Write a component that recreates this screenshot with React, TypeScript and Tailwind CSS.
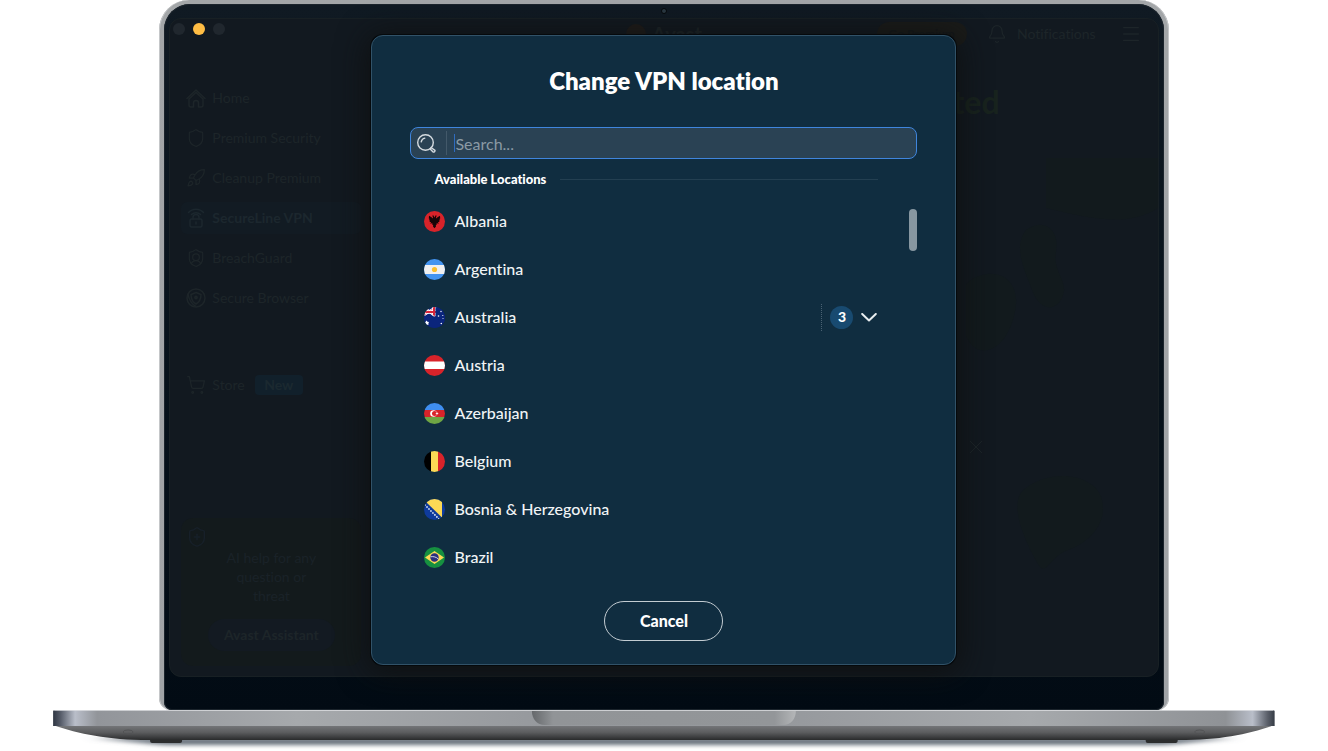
import React, { useState } from "react";
import {
  Bell,
  House,
  Menu,
  Rocket,
  Shield,
  ShieldPlus,
  ShieldUser,
  ShoppingCart,
} from "lucide-react";

const WifiLock = () => (
  <svg viewBox="0 0 20 20" className="size-5" fill="none" stroke="currentColor" strokeWidth="1.5" strokeLinecap="round">
    <path d="M2.5 4.5C6.5 0 13.500 0 17.500 4.500M5.500 6.500C8 4 12 4 14.500 6.500" />
    <rect x="4" y="11" width="12" height="8" rx="1.500" />
    <path d="M7 11V9.500a3 3 0 0 1 6 0V11M10 14v2" />
  </svg>
);

const SecureBrowserIcon = () => (
  <svg viewBox="0 0 20 20" className="size-5" fill="none" stroke="currentColor" strokeWidth="1.500">
    <circle cx="10" cy="10" r="9" />
    <path d="M10 4.500 15 6.500C15 11 13.500 14 10 16 6.500 14 5 11 5 6.500ZM2 6c1 6 3.500 10 8 12.500" />
    <circle cx="10" cy="9.500" r="1.200" fill="currentColor" />
  </svg>
);

// Outline house with a separate roof line and a small door notch
const HomeIcon = () => (
  <svg viewBox="0 0 20 20" className="size-5" fill="none" stroke="currentColor" strokeWidth="1.500" strokeLinejoin="round" strokeLinecap="round">
    <path d="M1 10.500 10 2l9 8.500M3 11v6a2 2 0 0 0 2 2h2.500v-4a2.500 2.500 0 0 1 5 0v4H15a2 2 0 0 0 2-2v-6L10 4.500z" />
  </svg>
);

const iconProps = { size: 20, strokeWidth: 1.5 };

const navItems = [
  { label: "Home", icon: <HomeIcon /> },
  { label: "Premium Security", icon: <Shield {...iconProps} /> },
  { label: "Cleanup Premium", icon: <Rocket {...iconProps} /> },
  { label: "SecureLine VPN", icon: <WifiLock />, active: true },
  { label: "BreachGuard", icon: <ShieldUser {...iconProps} /> },
  { label: "Secure Browser", icon: <SecureBrowserIcon /> },
];

// Every flag is drawn on a 21x21 square and rounded off by its wrapper
const locations = [
  {
    name: "Albania",
    flag: (
      <>
        <path fill="#d8232a" d="M0 0h21v21H0z" />
        <path
          fill="#160507"
          d="M10.500 6.500 9.300 4.200 8 5l1 .8L8.800 7.500 7.500 6.300 5 4.800l-.2 2.700.7.300-.4 1.500.8.300-.3 1.500 1.300-.1-.4 1.900 1.700-.9.200 1.700.8.600-.2 1.300 1.500 1.700 1.500-1.700-.2-1.300.8-.6.200-1.700 1.700.9-.4-1.900 1.300.1-.3-1.500.8-.3-.4-1.500.7-.3-.2-2.700-2.500 1.500-1.300 1.200-.2-1.700 1-.8-1.300-.8z"
        />
      </>
    ),
  },
  {
    name: "Argentina",
    flag: (
      <>
        <path fill="#4394f0" d="M0 0h21v21H0z" />
        <path fill="#f0f0f0" d="M0 6h21v9H0z" />
        <circle cx="10.500" cy="10.500" r="2.600" fill="#fbc02d" />
      </>
    ),
  },
  {
    name: "Australia",
    cities: 3,
    flag: (
      <>
        <path fill="#0b257c" d="M0 0h21v21H0z" />
        <path stroke="#fff" strokeWidth="2.400" d="M0 0l12 10M12 0 0 8" />
        <path stroke="#d9253a" strokeWidth="1" d="M0 0l12 10M12 0 0 8" />
        <path stroke="#fff" strokeWidth="3.600" d="M10 0v8M0 5h12" />
        <path stroke="#d9253a" strokeWidth="2" d="M10 0v8M0 5h12" />
        <path fill="#0b257c" d="M11.500 0H21v10h-9.500zM0 9.500h21V21H0z" />
        <path fill="#fff" d="m2.500 13.500 1 1.200 1.500.2-.6 1.400.2 1.500H2l-1-2z" />
        <circle cx="14.500" cy="9" r=".8" fill="#fff" />
        <circle cx="18.800" cy="8.500" r=".6" fill="#fff" />
        <circle cx="17" cy="4.500" r=".7" fill="#fff" />
        <circle cx="17.300" cy="16.500" r=".8" fill="#fff" />
        <circle cx="19" cy="11.500" r=".5" fill="#fff" />
      </>
    ),
  },
  {
    name: "Austria",
    flag: (
      <>
        <path fill="#d8232a" d="M0 0h21v21H0z" />
        <path fill="#fff" d="M0 6.500h21v7.500H0z" />
      </>
    ),
  },
  {
    name: "Azerbaijan",
    flag: (
      <>
        <path fill="#3f8ef0" d="M0 0h21v7H0z" />
        <path fill="#d8232a" d="M0 7h21v7H0z" />
        <path fill="#6fa544" d="M0 14h21v7H0z" />
        <circle cx="9.500" cy="10.500" r="3.300" fill="#fff" />
        <circle cx="10.500" cy="10.500" r="2.500" fill="#d8232a" />
        <path fill="#fff" d="m13 8.800.5 1.200 1.200.5-1.200.5-.5 1.200-.5-1.200-1.200-.5 1.200-.5z" />
      </>
    ),
  },
  {
    name: "Belgium",
    flag: (
      <>
        <path fill="#000" d="M0 0h7v21H0z" />
        <path fill="#fcd955" d="M7 0h7v21H7z" />
        <path fill="#d8232a" d="M14 0h7v21h-7z" />
      </>
    ),
  },
  {
    name: "Bosnia & Herzegovina",
    flag: (
      <>
        <path fill="#0f3b9c" d="M0 0h21v21H0z" />
        <path fill="#fcd955" d="M2 0h16v18.500L2 3z" />
        <path stroke="#fff" strokeWidth="1.500" strokeDasharray="1.500 1.300" d="M.5 5.500 15 20" />
      </>
    ),
  },
  {
    name: "Brazil",
    flag: (
      <>
        <path fill="#169040" d="M0 0h21v21H0z" />
        <path fill="#fcd955" d="m10.500 4 9.500 6.500-9.500 6.500L1 10.500z" />
        <circle cx="10.500" cy="10.500" r="4.200" fill="#2b2f7f" />
        <path stroke="#e8e8f0" strokeWidth=".9" fill="none" d="M6.500 9.800c3-.6 5.800.2 7.800 2.200" />
      </>
    ),
  },
];

function AppBackground() {
  return (
    <div className="col-start-1 row-start-1 flex min-w-0 flex-col text-[#1d2529]">
      <header className="grid h-[30px] grid-cols-[1fr_auto_1fr] items-center">
        <div className="flex gap-2 self-start pl-[3px] pt-1">
          <span className="size-3 rounded-full bg-[#20272e]" />
          <span className="size-3 rounded-full bg-[#ffbd44]" />
          <span className="size-3 rounded-full bg-[#20272e]" />
        </div>
        <div className="flex items-center gap-1.5 text-xl leading-5 font-bold">
          <span className="size-5 rounded-full bg-[#1f1c1a]" />
          Avast
        </div>
        <div className="flex items-center justify-end pr-4">
          <button className="h-6 rounded-full bg-[#1a1b19] px-3 text-xs font-bold text-[#131719]">
            Go Premium
          </button>
          <Bell className="ml-5" {...iconProps} />
          <span className="ml-2.5 text-sm">Notifications</span>
          <Menu className="ml-6" size={22} strokeWidth={1.5} />
        </div>
      </header>
      <div className="flex flex-1 justify-between">
        <aside className="w-[191px] pl-[11px] pt-[29px]">
          <nav>
            <ul>
              {navItems.map((item) => (
                <li key={item.label} className="flex h-10 items-center">
                  <a
                    href="#"
                    className={
                      item.active
                        ? "flex h-8 w-full items-center gap-1.5 rounded-md bg-[#121b23] pl-[5px] text-sm font-bold text-[#1c272e]"
                        : "flex h-8 w-full items-center gap-1.5 pl-[5px] text-sm"
                    }
                  >
                    {item.icon}
                    {item.label}
                  </a>
                </li>
              ))}
            </ul>
            <a href="#" className="mt-[47px] flex h-10 items-center gap-1.5 pl-[5px] text-sm">
              <ShoppingCart {...iconProps} />
              Store
              <span className="ml-1 flex h-5 w-12 items-center justify-center rounded-sm bg-[#11202b] text-sm font-bold text-[#1b2930]">
                New
              </span>
            </a>
          </nav>
          <section className="mt-[113px] flex h-[148px] flex-col items-center rounded-xl bg-[#131a1c] pt-2">
            <ShieldPlus className="ml-[5px] self-start" size={22} strokeWidth={1.5} color="#172029" />
            <p className="w-24 text-center text-sm leading-[19px] text-[#1a2228]">
              AI help for any question or threat
            </p>
            <button className="mt-3.5 h-8 rounded-full bg-[#131a22] px-4 text-sm font-bold">
              Avast Assistant
            </button>
          </section>
        </aside>
        <div className="flex w-[310px] flex-col pt-[37px]">
          <h1 className="w-[152px] text-right text-[32px] leading-8 font-bold text-[#18231e]">
            Protected
          </h1>
          <div className="mt-10 flex items-center pl-[118px]">
            <svg viewBox="0 0 192 420" className="w-full" fill="#121a1d">
              <path d="M60 72c20-14 34 2 30 22s14 30 6 46-24 10-30-8-20-42-6-60zM8 120c24-12 44 2 42 26s-16 50-36 46-30-60-6-72z" />
              <path d="M60 330c26-20 70-14 76 12s-16 44-34 50-22 28-30 14-34-62-12-76z" />
              <path d="M80 0h112v50c-30 20-70 10-112 0z" />
              <path d="m4 283 12 12m0-12-12 12" stroke="#1d2529" />
            </svg>
          </div>
        </div>
      </div>
    </div>
  );
}

function LocationDialog() {
  const [query, setQuery] = useState("");
  const shown = locations.filter((location) =>
    location.name.toLowerCase().includes(query.toLowerCase())
  );

  return (
    <div
      role="dialog"
      aria-labelledby="dialog-title"
      className="z-10 col-start-1 row-start-1 mt-4 mb-[11px] w-full max-w-[585px] justify-self-center rounded-xl border border-[#315268] bg-[#102d40] px-[38px] pt-[29px] pb-[23px] text-white shadow-[0_0_0_1px_#05090c,0_4px_30px_4px_rgba(14,16,16,0.9)]"
    >
      <h2 id="dialog-title" className="text-center text-2xl leading-8 font-extrabold">
        Change VPN location
      </h2>
      <label className="mt-[30px] flex h-8 items-center rounded-lg border border-[#3f85dd] bg-[#2a4254] pl-1.5">
        <svg viewBox="0 0 19 19" className="size-[19px]" fill="none" stroke="#d5dbe0" strokeWidth="1.400" strokeLinecap="round">
          <circle cx="8.500" cy="8.500" r="7.800" />
          <path d="M4.200 7.800c.4-2 1.700-3.300 3.600-3.700" />
          <path d="m14 13.500 3.600 2.600c1 .9-.4 2.700-1.500 1.800l-2.900-3" strokeLinejoin="round" />
        </svg>
        <span className="ml-2.5 h-6 w-px bg-[#43596a]" />
        <span className="ml-[7px] h-[18px] w-px bg-[#2f6cbf]" />
        <input
          type="text"
          aria-label="Search"
          placeholder="Search..."
          value={query}
          onChange={(e) => setQuery(e.target.value)}
          className="h-full min-w-0 flex-1 bg-transparent text-base text-white outline-none placeholder:text-[#8b9aa5]"
        />
      </label>
      <div className="mt-2.5 flex items-center gap-3.5 pr-[39px] pl-6">
        <h3 className="text-[13px] leading-5 font-black">Available Locations</h3>
        <span className="h-px flex-1 bg-[#233f51]" />
      </div>
      <div className="mt-2 flex">
        <ul className="min-w-0 flex-1 pr-8 pl-3.5">
          {shown.map((location) => (
            <li key={location.name} className="flex h-12 items-center gap-[9px] text-base font-medium">
              <span className="size-[21px] overflow-hidden rounded-full">
                <svg viewBox="0 0 21 21">{location.flag}</svg>
              </span>
              <span className="flex-1 text-[#f1f4f6]">{location.name}</span>
              {location.cities && (
                <button
                  aria-label={`${location.cities} cities`}
                  className="flex items-center border-l border-dotted border-[#4a6273] py-0.5 pl-2"
                >
                  <span className="flex size-[23px] items-center justify-center rounded-full bg-[#184a70] text-sm font-black">
                    {location.cities}
                  </span>
                  <svg viewBox="0 0 16 9" className="ml-2 h-[9px] w-4" fill="none" stroke="#e8edf0" strokeWidth="2" strokeLinecap="round" strokeLinejoin="round">
                    <path d="m1.200 1 6.800 6.500L14.800 1" />
                  </svg>
                </button>
              )}
            </li>
          ))}
        </ul>
        <div className="mt-3 h-[42px] w-2 rounded-full bg-[#8797a1]" />
      </div>
      <div className="mt-5 flex justify-center">
        <button className="h-10 w-[119px] rounded-full border border-[#c3ccd2] text-base font-black">
          Cancel
        </button>
      </div>
    </div>
  );
}

function LaptopBase() {
  return (
    <svg viewBox="0 0 1222 40" className="block w-[92%]">
      <defs>
        <linearGradient id="deck">
          <stop offset="0" stopColor="#2f3643" />
          <stop offset="0.006" stopColor="#555b68" />
          <stop offset="0.018" stopColor="#b9bec9" />
          <stop offset="0.036" stopColor="#92959a" />
          <stop offset="0.2" stopColor="#a6a9ac" />
          <stop offset="0.4" stopColor="#96999d" />
          <stop offset="0.6" stopColor="#96999d" />
          <stop offset="0.8" stopColor="#a6a9ac" />
          <stop offset="0.960" stopColor="#8f9296" />
          <stop offset="0.982" stopColor="#b9bec9" />
          <stop offset="0.994" stopColor="#5c616b" />
          <stop offset="1" stopColor="#353b45" />
        </linearGradient>
        <linearGradient id="belly" x1="0" y1="0" x2="0" y2="1">
          <stop offset="0" stopColor="#77797c" />
          <stop offset="0.500" stopColor="#5b5c5e" />
          <stop offset="1" stopColor="#2a2b2c" />
        </linearGradient>
        <linearGradient id="notch">
          <stop offset="0" stopColor="#65686b" />
          <stop offset="0.080" stopColor="#919497" />
          <stop offset="0.920" stopColor="#939699" />
          <stop offset="1" stopColor="#b4b6b8" />
        </linearGradient>
        <filter id="soft" x="-5%" y="-200%" width="110%" height="500%">
          <feGaussianBlur stdDeviation="8 2" />
        </filter>
      </defs>
      <path fill="#66707a" filter="url(#soft)" d="M40 28h1142l-70 7H110z" />
      <path fill="#2c2d2e" d="M97 28h32v3a2 2 0 0 1-2 2H99a2 2 0 0 1-2-2zM1093 28h32v3a2 2 0 0 1-2 2h-28a2 2 0 0 1-2-2z" />
      <path fill="url(#belly)" d="M0 15h1222c-26 9-54 15-96 15H96C54 30 26 24 0 15z" />
      <path fill="url(#deck)" d="M1 0h1220l1 1v15H0V1z" />
      <path fill="#e4e6e8" opacity=".7" d="M1 0h1220v1H1z" />
      <path fill="url(#notch)" d="M479 1h264c0 8-5 14-13 14H492c-8 0-13-6-13-14z" />
      <ellipse cx="75" cy="22" rx="5" ry="2" fill="none" stroke="#525355" />
      <ellipse cx="1147" cy="22" rx="5" ry="2" fill="none" stroke="#525355" />
    </svg>
  );
}

function App() {
  return (
    <main className="flex flex-col items-center overflow-hidden bg-white font-['Lato',sans-serif] [font-variant-ligatures:none]">
      <div className="w-[76%] rounded-t-[30px] rounded-b-xl bg-linear-to-b from-[#a3a6a8] to-[#a0a3a6] px-[5px] pt-1 shadow-[inset_1px_0_0_#c5c7c9,inset_-1px_0_0_#c5c7c9]">
        <div className="rounded-t-[26px] rounded-b-lg bg-linear-to-b from-[#101a23] to-[#020b14] px-[5px] pb-[33px] shadow-[inset_0_0_0_1px_#1b242c]">
          <div className="flex h-3.5 items-center justify-center">
            <span className="size-1.5 rounded-full border border-[#05090c] bg-[#2b3943]" />
          </div>
          <div className="grid rounded-xl border border-[#182024] bg-[#121920]">
            <AppBackground />
            <LocationDialog />
          </div>
        </div>
      </div>
      <LaptopBase />
    </main>
  );
}

export default App;
